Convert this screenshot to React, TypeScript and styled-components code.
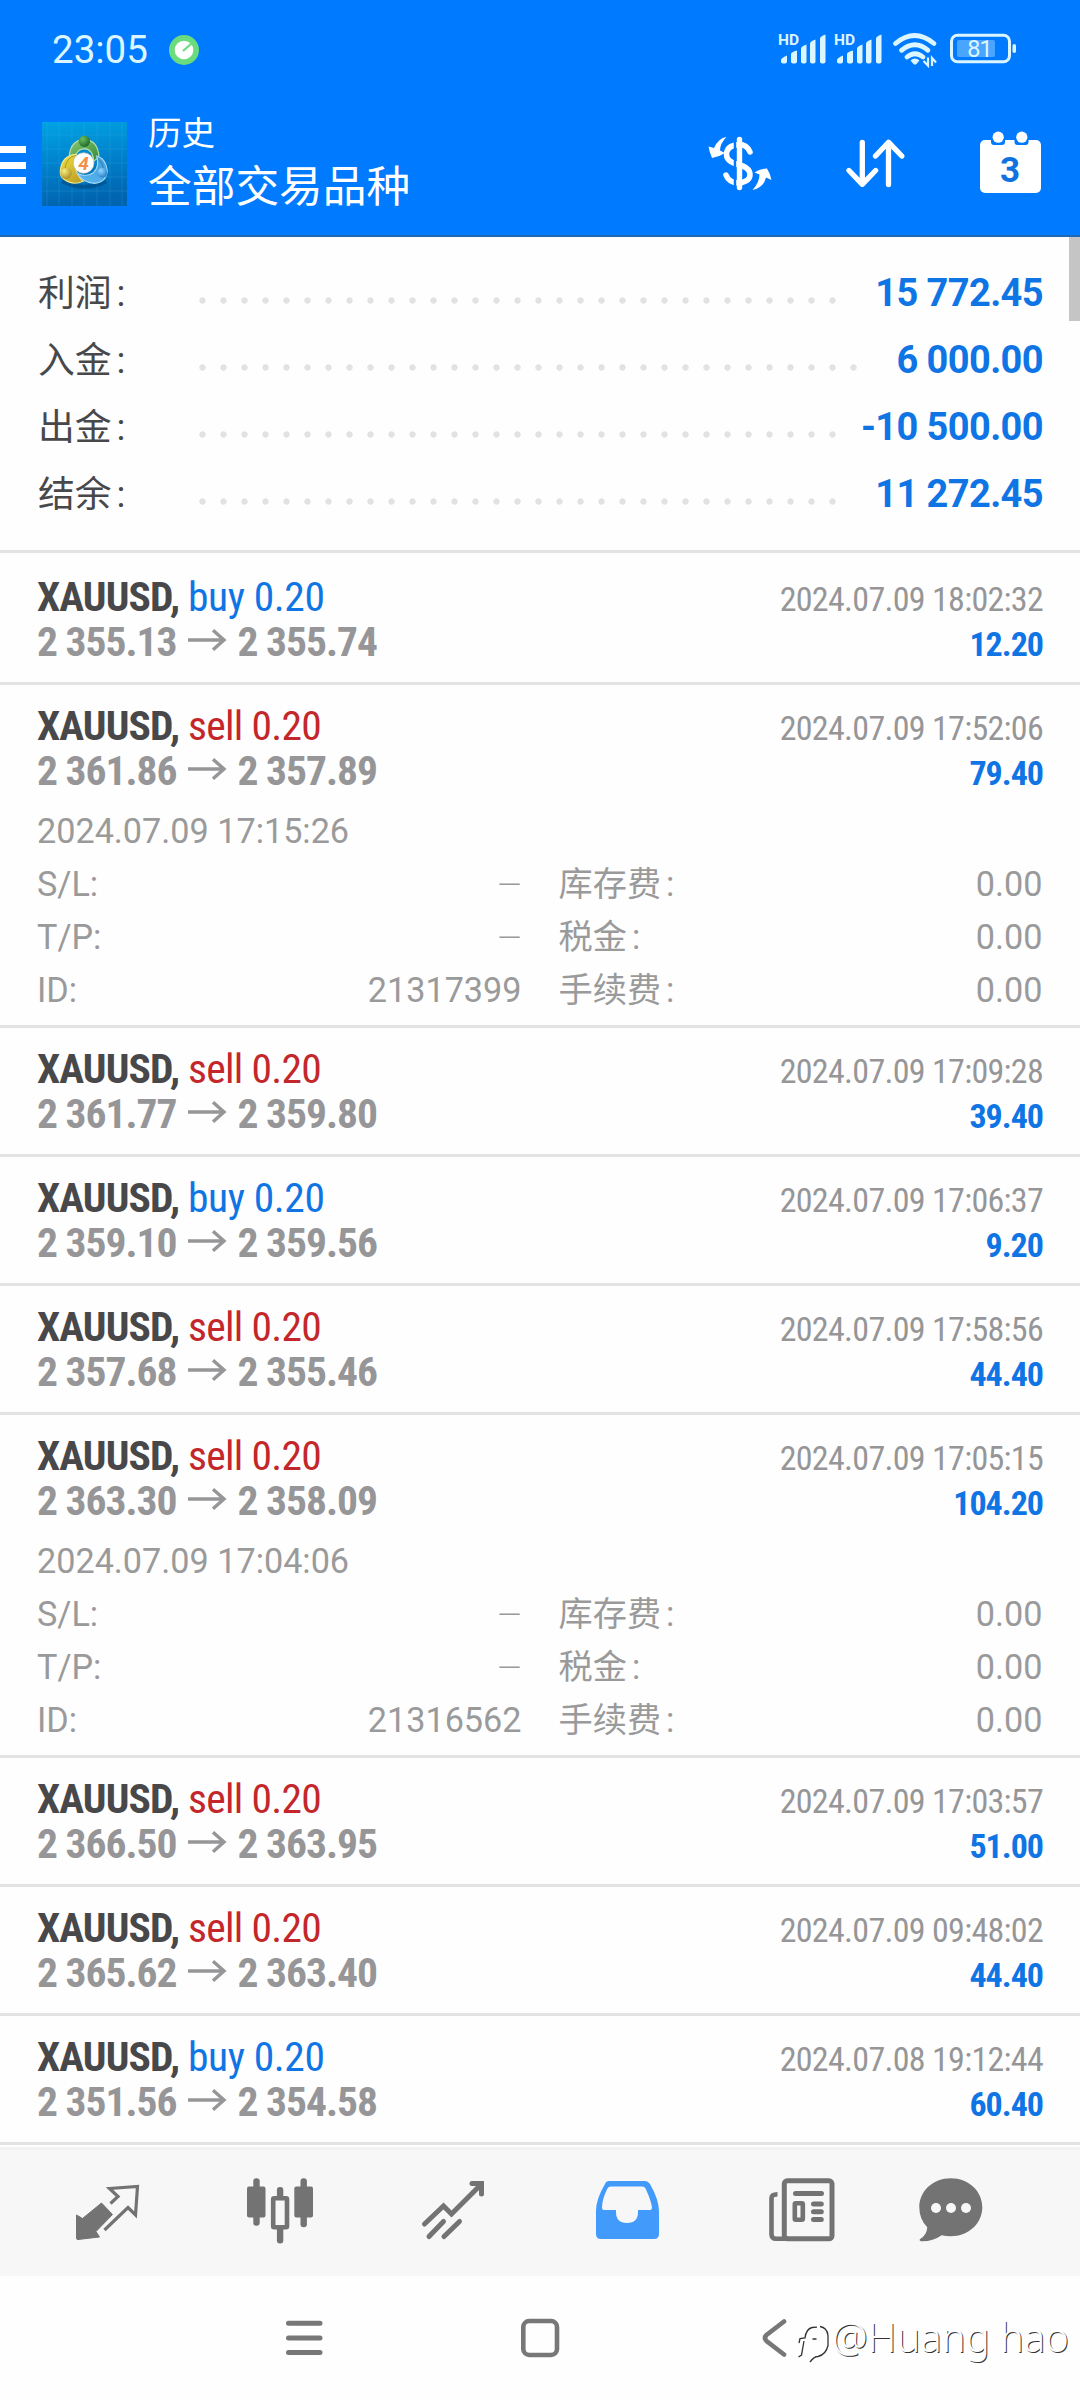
import React from "react";
import styled, { createGlobalStyle } from "styled-components";

const GlobalStyle = createGlobalStyle`
  html, body { margin: 0; padding: 0; background: #fff; }
  *, *::before, *::after { box-sizing: border-box; }
`;

const BLUE = "#1075e4";
const RED = "#c4272b";
const GREY = "#969698";

const Screen = styled.div`
  width: 1080px;
  height: 2400px;
  display: flex;
  flex-direction: column;
  overflow: hidden;
  background: #fefefe;
  font-family: Roboto, "Noto Sans CJK SC", sans-serif;
`;

const Svg = styled.svg`
  display: block;
  flex: none;
  overflow: visible;
`;

/* ---------- header ---------- */
const Header = styled.header`
  height: 237px;
  flex: none;
  background: #007aff;
  border-bottom: 2px solid #1f68b4;
  color: #fff;
`;

const StatusBar = styled.div`
  height: 100px;
  padding: 0 62px 0 52px;
  display: flex;
  align-items: center;
  justify-content: space-between;
`;

const StatusLeft = styled.div`
  display: flex;
  align-items: center;
  gap: 21px;
`;

const Clock = styled.span`
  font-size: 38.5px;
  line-height: 44px;
  color: #dcf6ff;
`;

const TitleBar = styled.div`
  height: 135px;
  display: flex;
  padding-right: 39px;
`;

const MenuButton = styled.div`
  width: 26px;
  margin: 46px 16px 0 0;
  display: flex;
  flex-direction: column;
  gap: 8.5px;
`;

const MenuBar = styled.span`
  height: 7px;
  background: #fff;
`;

const LogoBox = styled.div`
  padding-top: 22px;
  width: 85px;
`;

const Titles = styled.div`
  margin-left: 21px;
  padding-top: 6px;
  flex: 1;
  display: flex;
  flex-direction: column;
`;

const Title = styled.span<{ $size: number; $line: number }>`
  font-size: ${(p) => p.$size}px;
  line-height: ${(p) => p.$line}px;
`;

const Actions = styled.div`
  display: flex;
  padding-top: 30px;
  gap: 75px;
`;

/* ---------- summary ---------- */
const Summary = styled.section`
  height: 316px;
  flex: none;
  display: flex;
  border-bottom: 3px solid #e3e3e3;
`;

const SummaryRows = styled.div`
  flex: 1;
  padding: 23px 26px 0 38px;
`;

const SummaryRow = styled.div`
  height: 67px;
  display: flex;
  align-items: baseline;
  line-height: 67px;
`;

const SummaryLabel = styled.span`
  width: 154px;
  font-size: 36.8px;
  color: #48484a;
`;

const Colon = styled.span`
  margin-left: 5px;
`;

const Leader = styled.span<{ $count: number }>`
  width: ${(p) => p.$count * 21}px;
  height: 21px;
  align-self: center;
  margin-top: 13px;
  background: radial-gradient(circle, #e2e2e2 2.8px, transparent 3.6px) 0 0 / 21px 21px;
`;

const SummaryValue = styled.span`
  margin-left: auto;
  font-size: 38px;
  letter-spacing: -0.6px;
  font-weight: 680;
  color: ${BLUE};
`;

const Scrollbar = styled.div`
  width: 11px;
  height: 84px;
  background: #c5c5c5;
`;

/* ---------- deals ---------- */
const Deals = styled.main`
  padding-top: 3px;
  flex: none;
`;

const Deal = styled.article`
  padding: 18px 37px 0 37px;
  border-bottom: 3px solid #e3e3e3;
`;

const DealLine = styled.div`
  height: 45px;
  line-height: 45px;
  display: flex;
  align-items: baseline;
  justify-content: space-between;
`;

const Group = styled.div`
  display: flex;
  align-items: baseline;
`;

const Condensed = styled.span<{ $size: number; $color: string; $bold?: boolean; $track: number }>`
  font-size: ${(p) => p.$size}px;
  font-stretch: 75%;
  font-weight: ${(p) => (p.$bold ? 700 : 400)};
  letter-spacing: ${(p) => p.$track}px;
  color: ${(p) => p.$color};
  white-space: pre;
`;

const ArrowBox = styled.span`
  align-self: center;
  padding: 0 11px 3px 12px;
`;

const Bottom = styled.div<{ $open: boolean }>`
  height: ${(p) => (p.$open ? 232 : 18)}px;
  padding-top: 12px;
`;

const DetailRow = styled.div`
  height: 53px;
  line-height: 53px;
  display: grid;
  grid-template-columns: 484.5px 484px;
  column-gap: 37px;
  color: #9a9a9b;
  font-size: 34.2px;
  font-weight: 400;
`;

const DetailCell = styled.div`
  display: flex;
  justify-content: space-between;
  align-items: baseline;
`;

const Dash = styled.span`
  font-size: 31px;
  font-weight: 350;
`;

/* ---------- bottom bars ---------- */
const TabBar = styled.nav`
  height: 129px;
  flex: none;
  margin-top: 2px;
  border-top: 3px solid #f3f3f3;
  background: #f7f7f7;
  display: flex;
  align-items: flex-start;
  padding: 28px 0 0 75.5px;
`;

const Tab = styled.span<{ $w: number }>`
  width: ${(p) => p.$w}px;
`;

const SystemBar = styled.footer`
  flex: 1;
  display: flex;
  padding: 36px 8px 0 280px;
`;

const SystemKey = styled.span<{ $w: number }>`
  width: ${(p) => p.$w}px;
`;

const Watermark = styled.div`
  display: flex;
  align-items: center;
  height: 50px;
  gap: 2px;
`;

const WatermarkText = styled.span`
  font-family: "Noto Sans", sans-serif;
  font-size: 40px;
  font-weight: 300;
  line-height: 50px;
  color: #fff;
  white-space: nowrap;
  text-shadow: 1px 1px 0 #333;
`;

/* ---------- icons ---------- */
const StatusIcons = () => (
  <Svg width="240" height="34" viewBox="778 34 240 34" fill="#dcf6ff">
    {[0, 56].map((dx) => (
      <g key={dx} transform={`translate(${dx} 0)`}>
        <text x="778" y="46.3" fontFamily="Roboto" fontSize="15.5" fontWeight="700">HD</text>
        <path d="M781 61q0-2 6-4.500v6q0 2-2 2h-2q-2 0-2-2z" />
        <path d="M791 55q0-2 6-3.500v11q0 2-2 2h-2q-2 0-2-2z" />
        <path d="M801 49.500q0-2 5.500-4v17q0 2-2 2h-1.500q-2 0-2-2z" />
        <path d="M810 44.500q0-2 5.500-4v22q0 2-2 2h-1.500q-2 0-2-2z" />
        <path d="M820 39.500q0-2 5.500-4v27q0 2-2 2h-1.500q-2 0-2-2z" />
      </g>
    ))}
    <g fill="none" stroke="#dcf6ff" strokeWidth="4.800" strokeLinecap="round">
      <path d="M895.500 44.500q19-16 38.500 0" />
      <path d="M901.500 51.300q13.500-11 26.500 0" />
      <path d="M907 58q8-6.500 16 0" />
    </g>
    <path d="M910.500 61.500q4.500-4 9 0l-3 3.500q-1.500 1-3 0z" />
    <g stroke="#dcf6ff" strokeWidth="2.200" fill="none">
      <path d="M928 58.500v8l-4.500-4.500M932 67v-8l4 4.500" />
    </g>
    <rect x="951.500" y="36.200" width="58" height="26.600" rx="6" fill="none" stroke="#dcf6ff" strokeWidth="3" />
    <rect x="957" y="41" width="38" height="17" rx="2" fill="#4aa5ff" />
    <rect x="1012.500" y="45" width="3.500" height="9" rx="1.700" />
    <text x="979.500" y="58" fontFamily="Roboto" fontSize="23.500" textAnchor="middle" letterSpacing="-1">81</text>
  </Svg>
);

const Activity = () => (
  <Svg width="30" height="30" viewBox="0 0 30 30">
    <circle cx="15" cy="15" r="15" fill="#6bdc7e" />
    <circle cx="15" cy="15" r="9.300" fill="#fff" />
    <path d="M14 16l9-8" stroke="#6bdc7e" strokeWidth="2.200" />
  </Svg>
);

const Logo = () => (
  <Svg width="85" height="84" viewBox="42 122 85 84">
    <defs>
      <linearGradient id="bg" x1="0" y1="0" x2="0.150" y2="1">
        <stop offset="0" stopColor="#00a4e4" />
        <stop offset="0.500" stopColor="#0082cc" />
        <stop offset="1" stopColor="#0064b0" />
      </linearGradient>
      <linearGradient id="gr" x1="0" y1="0" x2="1" y2="1"><stop offset="0" stopColor="#8cc878" /><stop offset="1" stopColor="#2f8a2f" /></linearGradient>
      <linearGradient id="ye" x1="0" y1="0" x2="0.600" y2="1"><stop offset="0" stopColor="#f2e040" /><stop offset="1" stopColor="#c0a428" /></linearGradient>
      <linearGradient id="bl" x1="0.800" y1="0" x2="0.300" y2="1"><stop offset="0" stopColor="#3c9cdc" /><stop offset="1" stopColor="#5ab4ec" /></linearGradient>
      <radialGradient id="grHead" cx="0.350" cy="0.300" r="0.800"><stop offset="0" stopColor="#6cc05c" /><stop offset="1" stopColor="#15602a" /></radialGradient>
      <radialGradient id="yeHead" cx="0.350" cy="0.300" r="0.800"><stop offset="0" stopColor="#f8ee80" /><stop offset="1" stopColor="#a8861c" /></radialGradient>
      <radialGradient id="blHead" cx="0.350" cy="0.300" r="0.800"><stop offset="0" stopColor="#90d8ff" /><stop offset="1" stopColor="#1c78c4" /></radialGradient>
    </defs>
    <rect x="42" y="122" width="85" height="84" fill="url(#bg)" />
    <path d="M47 122v84M59 122v84M72 122v84M84 122v84M97 122v84M110 122v84M122 122v84M42 135h85M42 149h85M42 163h85M42 177h85M42 191h85" stroke="#4cc4f0" strokeOpacity="0.180" strokeWidth="1" />
    <g transform="translate(36 116) scale(0.3333)" strokeWidth="3.500">
      <path d="M78 196q65 32 132 0" stroke="#003a68" strokeOpacity="0.450" strokeWidth="12" fill="none" />
      <path d="M100 118q5-46 45-48q40 2 44 52l-16 14q-2-36-28-38q-26 2-30 34z" fill="url(#gr)" stroke="#b4dcae" />
      <path d="M73 165Q77 118 120 115L118 150Q122 180 142 196Q110 210 84 190Q72 182 73 165z" fill="url(#ye)" stroke="#f0e88c" />
      <path d="M182 120Q210 128 214 165Q210 200 175 202Q140 200 124 172Q150 186 172 170Q192 152 182 120z" fill="url(#bl)" stroke="#a0d8f8" />
      <path d="M120 118Q92 122 86 160M186 130Q202 140 202 160" fill="none" stroke="#1d3f50" strokeOpacity="0.350" strokeWidth="3" />
      <circle cx="145" cy="76" r="17" fill="url(#grHead)" />
      <circle cx="90" cy="172" r="17" fill="url(#yeHead)" />
      <circle cx="199" cy="170" r="15" fill="url(#blHead)" />
      <circle cx="143" cy="141" r="31" fill="#fff" stroke="#b8bcb0" strokeWidth="2" />
    </g>
    <text x="83.500" y="169.500" fontFamily="Roboto" fontSize="19" fontStyle="italic" fontWeight="700" fill="#f0904a" textAnchor="middle">4</text>
  </Svg>
);

const DollarIcon = () => (
  <Svg width="64" height="64" viewBox="708 130 64 64" fill="#fff">
    <path d="M750 152q-3-7.500-11-7.500-12.500 1-12.500 10 0 7 11.500 10 12 3 12 10t-11 8.500q-10 0-13-8" fill="none" stroke="#fff" strokeWidth="5.500" strokeLinecap="round" />
    <path d="M735 134v59" stroke="#007aff" strokeWidth="2.500" />
    <path d="M739.500 139.500v48" stroke="#fff" strokeWidth="5.400" strokeLinecap="round" />
    <path d="M726.500 137q-8 1-12.500 11l-5.500-1.500q1 6 3.500 11.500 7-1 13-5l-5-2.500q0-7 6.500-13.500z" />
    <path d="M752.500 190q11-2 13.500-12.500l5.500 2.500q-1-6-4.500-11.500-7 0-12.500 4l5 2q0 8-7 15.500z" />
  </Svg>
);

const SortIcon = () => (
  <Svg width="58" height="64" viewBox="847 130 58 64" fill="none" stroke="#fff" strokeWidth="5.300" strokeLinecap="round" strokeLinejoin="round">
    <path d="M862.300 142.500v41.500M849 170.500l13.300 13.800 13.300-13.800" />
    <path d="M888.500 184.500v-41.500M875.500 156l13-13.800 13.300 13.800" />
  </Svg>
);

const CalendarIcon = () => (
  <Svg width="61" height="64" viewBox="980 130 61 64">
    <rect x="980" y="140" width="61" height="53" rx="5" fill="#fff" />
    <path d="M991 139v3q0 3 3 3h8q3 0 3-3v-3zM1014.500 139v3q0 3 3 3h8q3 0 3-3v-3z" fill="#007aff" />
    <circle cx="998.200" cy="137.200" r="5.600" fill="#fff" />
    <circle cx="1021.800" cy="137.200" r="5.600" fill="#fff" />
    <text x="1010" y="181.500" fontFamily="Roboto" fontSize="35" fontWeight="700" fill="#1172de" textAnchor="middle">3</text>
  </Svg>
);

const PriceArrow = () => (
  <Svg width="38" height="22" viewBox="0 0 38 22" fill="none" stroke={GREY} strokeWidth="3.400">
    <path d="M0 11h36M25 1.300l11 9.700-11 9.700" />
  </Svg>
);

const TAB = "#737373";

const QuotesIcon = () => (
  <Svg width="66" height="66" viewBox="76 2178 66 66">
    <path d="M101.500 2203l11 11.500-16.500 17 3.500 5.500-21.500 2.500q-1.500 0-1.500-1.500v-23l6 3.500z" fill={TAB} stroke={TAB} strokeLinejoin="round" />
    <path d="M110.500 2203l7.500-7-8.500-8 28-2-2 28.500-7.500-7.500-23.500 22.500" transform="translate(0 0.500)" fill="none" stroke={TAB} strokeWidth="3.200" />
  </Svg>
);

const CandlesIcon = () => (
  <Svg width="66" height="66" viewBox="247 2178 66 66" fill={TAB}>
    <rect x="247" y="2186.500" width="18.500" height="31" rx="2" />
    <rect x="253.300" y="2178.300" width="6.400" height="47.500" rx="3" />
    <rect x="294.300" y="2186.500" width="18.700" height="31" rx="2" />
    <rect x="300.500" y="2178.300" width="6.400" height="49" rx="3" />
    <rect x="276.900" y="2187" width="6.400" height="12" rx="3" />
    <rect x="276.900" y="2226" width="6.400" height="17.500" rx="3" />
    <rect x="273.200" y="2198.300" width="13.800" height="29" fill="#f7f7f7" stroke={TAB} strokeWidth="4.600" rx="1" />
  </Svg>
);

const ChartIcon = () => (
  <Svg width="66" height="66" viewBox="422 2178 66 66" fill="none" stroke={TAB} strokeWidth="5" strokeLinecap="round">
    <path d="M424.500 2224l19-18 8 8 30-30M472 2183.500h9.500v10.500" strokeLinejoin="miter" />
    <path d="M443.500 2221.500l-14.500 15M459.500 2221.500l-15.500 15" />
  </Svg>
);

const InboxIcon = () => (
  <Svg width="66" height="66" viewBox="595 2178 66 66">
    <path fillRule="evenodd" fill="#429bfb" d="M609 2181h36q3 0 5 3 9 16 9 27v23q0 5-5 5h-53q-5 0-5-5v-23q0-12 9-27 1-3 4-3zM611 2186.500q-3 0-4 3-5 10-5 18 0 2.500 2 2.500h12v2q0 11 11 11t11-11v-2h12q2 0 2-2.500-1-7-6-18-1-3-4-3z" />
  </Svg>
);

const NewsIcon = () => (
  <Svg width="68" height="66" viewBox="768 2178 68 66" fill="none" stroke={TAB}>
    <rect x="784.300" y="2180.800" width="47.700" height="58" rx="3" strokeWidth="5" />
    <path d="M777.500 2194.300q-6 0-6 4v36q0 4.500 4.500 4.500h12" strokeWidth="4.600" />
    <path d="M795.500 2193.500h26M813.500 2204h7.800M813.500 2211.700h7.800M813.500 2219.500h7.800" strokeWidth="5" strokeLinecap="round" />
    <rect x="794.800" y="2203.300" width="8" height="16.500" strokeWidth="4.600" rx="1" />
  </Svg>
);

const ChatIcon = () => (
  <Svg width="66" height="66" viewBox="919 2178 66 66">
    <path d="M950.800 2178.300c18 0 31.500 13 31.500 29s-13.500 29-31.500 29q-5 0-9-1-9 6-19 6-4 0-3-2 7-4 7.500-12-8-8-8-20c0-16 13.500-29 31.500-29z" fill={TAB} />
    <circle cx="936" cy="2208" r="5" fill="#f7f7f7" />
    <circle cx="951" cy="2208" r="5" fill="#f7f7f7" />
    <circle cx="966" cy="2208" r="5" fill="#f7f7f7" />
  </Svg>
);

const RecentsKey = () => (
  <Svg width="50" height="50" viewBox="280 2312 50 50" stroke="#777" strokeWidth="5" strokeLinecap="round">
    <path d="M288.500 2323.300h31.500M288.500 2338h31.500M288.500 2352.600h31.500" />
  </Svg>
);

const HomeKey = () => (
  <Svg width="50" height="50" viewBox="515 2312 50 50">
    <rect x="523.300" y="2321" width="33.700" height="34" rx="6" fill="none" stroke="#777" strokeWidth="4.600" />
  </Svg>
);

const BackKey = () => (
  <Svg width="36" height="50" viewBox="758 2312 36 50">
    <path d="M784 2321.500l-17.500 13.500q-3 3 0 6l17.500 13.500" fill="none" stroke="#777" strokeWidth="4.600" strokeLinecap="round" />
  </Svg>
);

const WatermarkIcon = () => (
  <Svg width="32" height="50" viewBox="798 2312 32 50" fill="none" stroke="#333" strokeWidth="1.300">
    <path d="M799 2343l1-4.500 5-.500q1-9 7-10.500l5-.300M804 2341l-2.500 14-3 2M812.500 2339h4M820 2326.500q7 1 8 9v10q-2 9-10 11-4 0-8 5.500" />
  </Svg>
);

/* ---------- data ---------- */
const totals = [
  { label: "利润", value: "15 772.45", dots: 31 },
  { label: "入金", value: "6 000.00", dots: 32 },
  { label: "出金", value: "-10 500.00", dots: 31 },
  { label: "结余", value: "11 272.45", dots: 31 },
];

type DealData = { side: "buy" | "sell"; from: string; to: string; time: string; profit: string; opened?: string; id?: string };

const deals: DealData[] = [
  { side: "buy", from: "2 355.13", to: "2 355.74", time: "2024.07.09 18:02:32", profit: "12.20" },
  { side: "sell", from: "2 361.86", to: "2 357.89", time: "2024.07.09 17:52:06", profit: "79.40", opened: "2024.07.09 17:15:26", id: "21317399" },
  { side: "sell", from: "2 361.77", to: "2 359.80", time: "2024.07.09 17:09:28", profit: "39.40" },
  { side: "buy", from: "2 359.10", to: "2 359.56", time: "2024.07.09 17:06:37", profit: "9.20" },
  { side: "sell", from: "2 357.68", to: "2 355.46", time: "2024.07.09 17:58:56", profit: "44.40" },
  { side: "sell", from: "2 363.30", to: "2 358.09", time: "2024.07.09 17:05:15", profit: "104.20", opened: "2024.07.09 17:04:06", id: "21316562" },
  { side: "sell", from: "2 366.50", to: "2 363.95", time: "2024.07.09 17:03:57", profit: "51.00" },
  { side: "sell", from: "2 365.62", to: "2 363.40", time: "2024.07.09 09:48:02", profit: "44.40" },
  { side: "buy", from: "2 351.56", to: "2 354.58", time: "2024.07.08 19:12:44", profit: "60.40" },
];

const Detail = ({ left, value, right }: { left: string; value?: string; right: string }) => (
  <DetailRow>
    <DetailCell><span>{left}:</span>{value ? <span>{value}</span> : <Dash>—</Dash>}</DetailCell>
    <DetailCell><span>{right}<Colon>:</Colon></span><span>0.00</span></DetailCell>
  </DetailRow>
);

const DealItem = ({ deal }: { deal: DealData }) => (
  <Deal>
    <DealLine>
      <Group>
        <Condensed $size={41.5} $track={-0.9} $color="#48484a" $bold>XAUUSD, </Condensed>
        <Condensed $size={41.5} $track={deal.side === "buy" ? -0.4 : -0.7} $color={deal.side === "buy" ? BLUE : RED}>{deal.side} 0.20</Condensed>
      </Group>
      <Condensed $size={34} $track={-0.7} $color={GREY}>{deal.time}</Condensed>
    </DealLine>
    <DealLine>
      <Group>
        <Condensed $size={41.5} $track={-1} $color={GREY} $bold>{deal.from}</Condensed>
        <ArrowBox><PriceArrow /></ArrowBox>
        <Condensed $size={41.5} $track={-1} $color={GREY} $bold>{deal.to}</Condensed>
      </Group>
      <Condensed $size={34} $track={-1} $color={BLUE} $bold>{deal.profit}</Condensed>
    </DealLine>
    <Bottom $open={!!deal.id}>
      {deal.id && (
        <>
          <DetailRow><span>{deal.opened}</span></DetailRow>
          <Detail left="S/L" right="库存费" />
          <Detail left="T/P" right="税金" />
          <Detail left="ID" value={deal.id} right="手续费" />
        </>
      )}
    </Bottom>
  </Deal>
);

export default function App() {
  return (
    <Screen>
      <GlobalStyle />
      <Header>
        <StatusBar>
          <StatusLeft><Clock>23:05</Clock><Activity /></StatusLeft>
          <StatusIcons />
        </StatusBar>
        <TitleBar>
          <MenuButton><MenuBar /><MenuBar /><MenuBar /></MenuButton>
          <LogoBox><Logo /></LogoBox>
          <Titles>
            <Title $size={33.5} $line={55}>历史</Title>
            <Title $size={43.7} $line={53}>全部交易品种</Title>
          </Titles>
          <Actions><DollarIcon /><SortIcon /><CalendarIcon /></Actions>
        </TitleBar>
      </Header>
      <Summary>
        <SummaryRows>
          {totals.map((t) => (
            <SummaryRow key={t.label}>
              <SummaryLabel>{t.label}<Colon>:</Colon></SummaryLabel>
              <Leader $count={t.dots} />
              <SummaryValue>{t.value}</SummaryValue>
            </SummaryRow>
          ))}
        </SummaryRows>
        <Scrollbar />
      </Summary>
      <Deals>
        {deals.map((d) => <DealItem key={d.time} deal={d} />)}
      </Deals>
      <TabBar>
        <Tab $w={171}><QuotesIcon /></Tab>
        <Tab $w={175}><CandlesIcon /></Tab>
        <Tab $w={173}><ChartIcon /></Tab>
        <Tab $w={173}><InboxIcon /></Tab>
        <Tab $w={151}><NewsIcon /></Tab>
        <Tab $w={66}><ChatIcon /></Tab>
      </TabBar>
      <SystemBar>
        <SystemKey $w={235}><RecentsKey /></SystemKey>
        <SystemKey $w={243}><HomeKey /></SystemKey>
        <SystemKey $w={40}><BackKey /></SystemKey>
        <Watermark><WatermarkIcon /><WatermarkText>@Huang hao</WatermarkText></Watermark>
      </SystemBar>
    </Screen>
  );
}
